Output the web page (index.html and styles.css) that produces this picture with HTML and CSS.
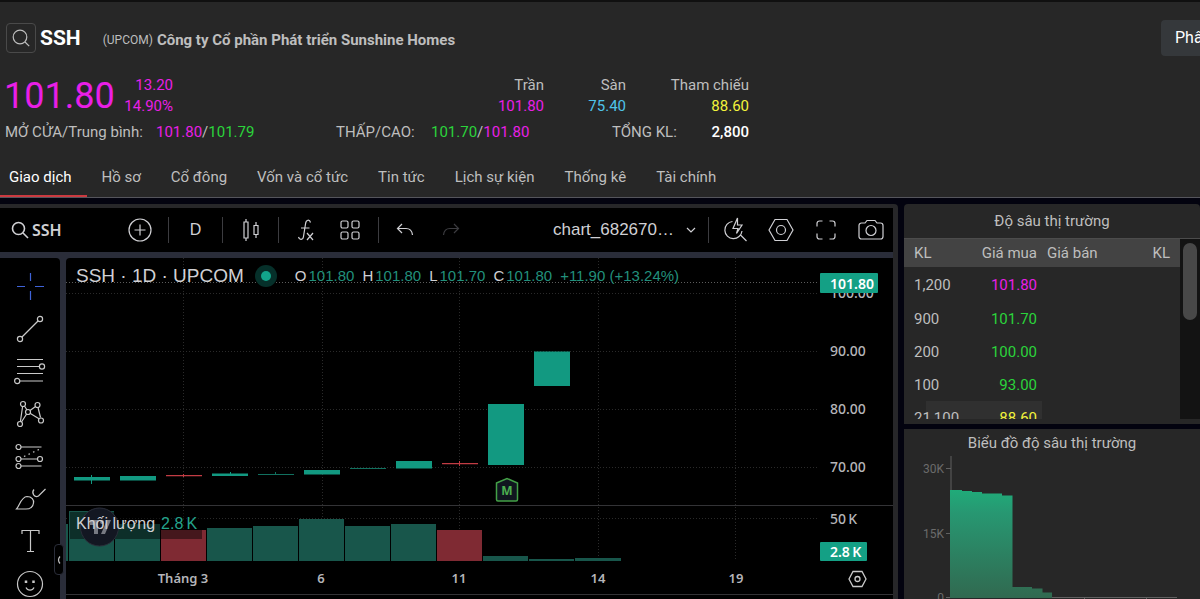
FILE: index.html
```html
<!DOCTYPE html>
<html lang="vi">
<head>
<meta charset="utf-8">
<title>SSH - Công ty Cổ phần Phát triển Sunshine Homes</title>
<link rel="stylesheet" href="styles.css">
</head>
<body>
<header class="quote">
  <div class="company">
    <button class="search-btn" aria-label="Tìm mã">
      <svg width="20" height="20" viewBox="0 0 20 20" class="ico"><circle cx="9" cy="9" r="6.8"/><path d="M14 14l4.2 4.2"/></svg>
    </button>
    <h1 class="ticker">SSH</h1>
    <span class="exchange">(UPCOM)</span>
    <span class="company-name">Công ty Cổ phần Phát triển Sunshine Homes</span>
    <div class="actions"><button class="analyze">Phân tích</button></div>
  </div>
  <div class="prices">
    <span class="last ceil">101.80</span>
    <span class="pair change ceil"><span>13.20</span><span>14.90%</span></span>
    <span class="pair p-ceil"><span>Trần</span><span class="ceil">101.80</span></span>
    <span class="pair p-floor"><span>Sàn</span><span class="floor">75.40</span></span>
    <span class="pair p-ref"><span>Tham chiếu</span><span class="ref">88.60</span></span>
  </div>
  <div class="stats">
    <span class="s-open">MỞ CỬA/Trung bình:</span>
    <span class="s-openv"><span class="ceil">101.80</span>/<span class="up">101.79</span></span>
    <span class="s-low">THẤP/CAO:</span>
    <span class="s-lowv"><span class="up">101.70</span>/<span class="ceil">101.80</span></span>
    <span class="s-vol">TỔNG KL:</span>
    <span class="s-volv">2,800</span>
  </div>
  <nav class="tabs">
    <a href="#" class="tab active">Giao dịch</a>
    <a href="#" class="tab">Hồ sơ</a>
    <a href="#" class="tab">Cổ đông</a>
    <a href="#" class="tab">Vốn và cổ tức</a>
    <a href="#" class="tab">Tin tức</a>
    <a href="#" class="tab">Lịch sự kiện</a>
    <a href="#" class="tab">Thống kê</a>
    <a href="#" class="tab">Tài chính</a>
  </nav>
</header>

<main class="workspace">
  <section class="chart-panel">
    <div class="toolbar">
      <button class="tb symbol"><svg width="18" height="18" viewBox="0 0 18 18" class="ico bold"><circle cx="7.5" cy="7.5" r="6"/><path d="M12 12l5 5"/></svg>SSH</button>
      <button class="tb w57" aria-label="So sánh"><svg width="24" height="24" viewBox="0 0 24 24" class="ico"><circle cx="12" cy="12" r="11"/><path d="M12 6.500v11M6.500 12h11"/></svg></button>
      <i class="sep"></i>
      <button class="tb w53 interval">D</button>
      <i class="sep"></i>
      <button class="tb w55" aria-label="Kiểu nến"><svg width="18" height="24" viewBox="0 0 18 24" class="ico"><path d="M2 4h4v16H2zM4 1v3M4 20v3M12 7.500h4v9h-4zM14 4v3.500M14 16.500V20"/></svg></button>
      <i class="sep"></i>
      <button class="tb w54" aria-label="Chỉ báo"><svg width="20" height="24" viewBox="0 0 20 24" class="ico"><path d="M2.500 19c1 3.500 4.500 3 5-.5L9.500 6C10 1.500 13.500 1 14.500 4.500M5 10h8.500M11 15l6 7M17 15l-6 7"/></svg></button>
      <button class="tb w34" aria-label="Mẫu chỉ báo"><svg width="22" height="22" viewBox="0 0 22 22" class="ico"><rect x="2" y="2" width="7" height="7" rx="1.500"/><rect x="13" y="2" width="7" height="7" rx="1.500"/><rect x="2" y="13" width="7" height="7" rx="1.500"/><rect x="13" y="13" width="7" height="7" rx="1.500"/></svg></button>
      <i class="sep wide"></i>
      <button class="tb w46" aria-label="Hoàn tác"><svg width="18" height="14" viewBox="0 0 18 14" class="ico"><path d="M6 1L1.500 5.500 6 10M1.500 5.500H10c4 0 6 2 6.500 6.500"/></svg></button>
      <button class="tb w46 off" aria-label="Làm lại"><svg width="18" height="14" viewBox="0 0 18 14" class="ico"><path d="M12 1l4.500 4.500L12 10M16.500 5.500H8c-4 0-6 2-6.500 6.500"/></svg></button>
      <div class="tb-right">
        <button class="tb layout">chart_682670…<svg width="10" height="6" viewBox="0 0 10 6" class="ico"><path d="M1 1l4 4 4-4"/></svg></button>
        <i class="sep wide-right"></i>
        <button class="tb w45" aria-label="Tìm nhanh"><svg width="26" height="26" viewBox="0 0 26 26" class="ico"><path d="M9.500 4.500A8.600 8.600 0 1 0 19 14M17.500 18l6 6M14.500 1L10 11.500h5l-1.500 5L19 8h-4.500z"/></svg></button>
        <button class="tb w45" aria-label="Cài đặt"><svg width="26" height="24" viewBox="0 0 26 24" class="ico"><path d="M1 12L7 1.500h12L25 12l-6 10.500H7z"/><circle cx="13" cy="12" r="4.500"/></svg></button>
        <button class="tb w45" aria-label="Toàn màn hình"><svg width="22" height="22" viewBox="0 0 22 22" class="ico"><path d="M2 7.500v-3A2.500 2.500 0 0 1 4.500 2h3M14.500 2h3A2.500 2.500 0 0 1 20 4.500v3M20 14.500v3a2.500 2.500 0 0 1-2.500 2.500h-3M7.500 20h-3A2.500 2.500 0 0 1 2 17.500v-3"/></svg></button>
        <button class="tb w45" aria-label="Chụp ảnh"><svg width="26" height="22" viewBox="0 0 26 22" class="ico"><path d="M1 6.500A2.500 2.500 0 0 1 3.500 4H7l2-2.500h8L19 4h3.500A2.500 2.500 0 0 1 25 6.500v11a2.500 2.500 0 0 1-2.500 2.500h-19A2.500 2.500 0 0 1 1 17.500z"/><circle cx="13" cy="11.500" r="5"/></svg></button>
      </div>
    </div>
    <div class="chart-body">
      <div class="tools">
        <button class="tool cross" aria-label="Con trỏ"><svg width="32" height="28" viewBox="0 0 32 28" class="ico"><path d="M3 14.500h8M21 14.500h9M16.500 1v8M16.500 19v9"/></svg></button>
        <button class="tool" aria-label="Đường xu hướng"><svg width="32" height="28" viewBox="0 0 32 28" class="ico"><circle cx="6" cy="24" r="2.600"/><circle cx="26" cy="4" r="2.600"/><path d="M8 22L24 6"/></svg></button>
        <button class="tool" aria-label="Fibonacci"><svg width="32" height="28" viewBox="0 0 32 28" class="ico"><path d="M3 2.500h26M3 9.500h22M3 16.500h26M6 24h23"/><circle cx="28" cy="9.500" r="2.600"/><circle cx="3.200" cy="24" r="2.600"/></svg></button>
        <button class="tool" aria-label="Mẫu hình"><svg width="32" height="28" viewBox="0 0 32 28" class="ico"><path d="M8.600 6.500L6.400 21.500M10.500 6l2.500 4M16 10.500l5.500-4M24 7.500l2.500 10M16 13.300l9 5.500M12.600 14L7.500 22"/><circle cx="9" cy="4" r="2.500"/><circle cx="23.500" cy="5" r="2.500"/><circle cx="14" cy="12" r="2.500"/><circle cx="6" cy="24" r="2.500"/><circle cx="27" cy="20.500" r="2.500"/></svg></button>
        <button class="tool" aria-label="Dự báo"><svg width="32" height="28" viewBox="0 0 32 28" class="ico"><path d="M7 5h20.500M7 17h16M7 24h20.500"/><path d="M10 14.500L27 6.500" stroke-dasharray="1.500 3.500"/><circle cx="4.500" cy="5" r="2.500"/><circle cx="4.500" cy="17" r="2.500"/><circle cx="26" cy="17" r="2.500"/><circle cx="4.500" cy="24" r="2.500"/></svg></button>
        <button class="tool" aria-label="Cọ vẽ"><svg width="32" height="28" viewBox="0 0 32 28" class="ico"><path d="M2.500 24C6 20 7 12 13 11.500c5 0 7 3.500 6.500 6.500-.5 4-3.500 6-7.500 6z"/><path d="M20 4.500c-3 3.500.5 8.500 4.500 6.500L31.500 4"/></svg></button>
        <button class="tool" aria-label="Văn bản"><svg width="32" height="28" viewBox="0 0 32 28" class="ico"><path d="M8 7V3.500h17V7M16.500 3.500v21M13 24.500h7"/></svg></button>
        <button class="tool" aria-label="Biểu tượng"><svg width="32" height="28" viewBox="0 0 32 28" class="ico"><circle cx="16" cy="14" r="12.500"/><path d="M12 17.500c1.500 3.500 6.500 3.500 8 0"/><path d="M12 10.500v2.500M19.500 10.500v2.500" stroke-width="2.500"/></svg></button>
      </div>
      <button class="collapse" aria-label="Thu gọn"><svg width="4" height="8" viewBox="0 0 4 8" class="ico"><path d="M3 0.500Q0 4 3 7.500"/></svg></button>
      <div class="plot">
        <svg class="plot-svg" viewBox="66 258 827 341" role="img" aria-label="Biểu đồ giá SSH">
          <g class="grid">
            <path d="M66 293.500H819M66 351.500H819M66 409.500H819M66 467.500H819M66 518.500H819"/>
            <path d="M183.500 258V561M322.500 258V561M459.500 258V561M598.500 258V561M735.500 258V561"/>
          </g>
          <path class="price-line" d="M66 282.500H819"/>
          <path class="divider" d="M66 505.500H894M66 594.500H894"/>
          <g class="vol">
            <path d="M66 524h2v37h-2zM69 511h45v50H69zM115 524h45v37h-45zM207 528h45v33h-45zM253 526h45v35h-45zM299 519h45v42h-45zM345 526h45v35h-45zM391 524h45v37h-45zM483 556h45v5h-45zM529 559h45v2h-45zM575 558h46v3h-46z"/>
            <path class="dn" d="M161 530h45v31h-45zM437 530h45v31h-45z"/>
          </g>
          <g class="candles">
            <path d="M74 477h36v3.500H74zM91 475h1v9h-1zM120 476h36v4.500h-36zM212 473.500h36v2.500h-36zM230 472h1v2h-1zM304 470h36v4.500h-36zM396 461h36v7.500h-36zM488 404h36v61h-36zM534 351.500h36v34.500h-36z"/>
            <path class="thin" d="M258 474h36v1h-36zM275 472h1v3h-1zM350 468h36v1h-36z"/>
            <path class="dn" d="M166 475h36v1.200h-36zM183 474h1v3h-1zM442 463h36v1.200h-36zM459 461h1v5h-1z"/>
          </g>
          <path class="badge" d="M496.500 483L507 478.500 517.500 483V499.500a1.500 1.500 0 0 1-1.500 1.500H498a1.500 1.500 0 0 1-1.500-1.500z"/>
          <text class="badge-m" x="507" y="495">M</text>
          <g class="axis">
            <text x="830" y="298">100.00</text>
            <text x="830" y="356">90.00</text>
            <text x="830" y="414">80.00</text>
            <text x="830" y="472">70.00</text>
            <text x="830" y="524">50&#8201;K</text>
          </g>
          <g class="times">
            <text x="183" y="583">Tháng 3</text>
            <text x="321" y="583">6</text>
            <text x="459" y="583">11</text>
            <text x="598" y="583">14</text>
            <text x="736" y="583">19</text>
          </g>
          <rect class="tag" x="820" y="273" width="58" height="20" rx="1"/>
          <text class="tag-text" x="830" y="289">101.80</text>
          <rect class="tag" x="820" y="542" width="47" height="19" rx="1"/>
          <text class="tag-text" x="830" y="557">2.8&#8201;K</text>
          <g class="gear"><path d="M849 579l4-7.500h9l4 7.500-4 7.500h-9z"/><circle cx="857.500" cy="579" r="2.500"/></g>
          <rect class="legend-bg" x="70" y="512" width="132" height="27"/>
          <circle class="tv" cx="99.500" cy="527" r="19"/>
          <path class="tv-mark" d="M90 520h8v14h-4v-9h-4zM107 520h4l-6 14h-4z"/>
          <circle class="tv-mark" cx="102" cy="522" r="2"/>
        </svg>
        <div class="legend">
          <span class="legend-title">SSH · 1D · UPCOM</span>
          <i class="status"></i>
          <span class="ohlc"><span>O<b>101.80</b></span><span>H<b>101.80</b></span><span>L<b>101.70</b></span><span>C<b>101.80</b></span><b>+11.90 (+13.24%)</b></span>
        </div>
        <div class="vol-legend">Khối lượng<b>2.8&#8201;K</b></div>
      </div>
    </div>
  </section>

  <aside class="side">
    <section class="depth">
      <h2 class="side-title">Độ sâu thị trường</h2>
      <div class="depth-scroll">
        <table class="depth-table">
          <thead><tr><th class="qty">KL</th><th class="r">Giá mua</th><th>Giá bán</th><th class="r qty">KL</th></tr></thead>
          <tbody>
            <tr><td>1,200</td><td class="r ceil">101.80</td><td></td><td></td></tr>
            <tr><td>900</td><td class="r up">101.70</td><td></td><td></td></tr>
            <tr><td>200</td><td class="r up">100.00</td><td></td><td></td></tr>
            <tr><td>100</td><td class="r up">93.00</td><td></td><td></td></tr>
            <tr class="full"><td>21,100</td><td class="r ref">88.60</td><td></td><td></td></tr>
          </tbody>
        </table>
        <div class="track"><div class="thumb"></div></div>
      </div>
    </section>
    <section class="depth-chart">
      <h2 class="side-title">Biểu đồ độ sâu thị trường</h2>
      <svg class="depth-svg" viewBox="904 456 296 143" role="img" aria-label="Biểu đồ độ sâu">
        <defs><linearGradient id="fill" x1="0" y1="490" x2="0" y2="600" gradientUnits="userSpaceOnUse"><stop offset="0" stop-color="#20ab79"/><stop offset=".2" stop-color="#279872"/><stop offset="1" stop-color="#31684f"/></linearGradient></defs>
        <path class="depth-axis" d="M951 456V598M946 468.500h5M946 533.500h5M946 597.500H1177M1084.500 597v2M1146.500 597v2"/>
        <path fill="url(#fill)" d="M950 490h12v1h10v1h10v1.500h20v2h10.500V587h19.500v1.500h10.500V592.500h9.500V598H950z"/>
        <g class="depth-labels"><text x="944" y="473">30K</text><text x="944" y="538">15K</text><text x="944" y="602">0</text></g>
      </svg>
    </section>
  </aside>
</main>
</body>
</html>
```
FILE: styles.css
```css
* { box-sizing: border-box; }
body {
  margin: 0;
  height: 100vh;
  display: flex;
  flex-direction: column;
  overflow: hidden;
  background: #03030f;
  color: #bebebe;
  font: 15px/20px Roboto, sans-serif;
}
button { background: none; border: 0; padding: 0; color: inherit; font: inherit; }
h1, h2 { margin: 0; }
.ico { fill: none; stroke: currentColor; stroke-width: 1.2; flex: none; }
.ico.bold { stroke-width: 1.6; }

.ceil { color: #e91fe6; }
.up { color: #2bd43b; }
.floor { color: #4fc3ea; }
.ref { color: #f3f33c; }

/* Quote header */
.quote {
  flex: none;
  background: #272727;
  border-top: 2px solid #101010;
  border-bottom: 1px solid #55555c;
  overflow: hidden;
  white-space: nowrap;
}
.company { display: flex; align-items: center; height: 36px; margin-top: 18px; padding-left: 6px; }
.search-btn {
  width: 30px;
  height: 30px;
  border: 1px solid #4a4a4a;
  border-radius: 4px;
  display: flex;
  align-items: center;
  justify-content: center;
}
.ticker { margin-left: 4px; color: #fff; font-size: 21px; line-height: 24px; }
.exchange { margin: 4px 4px 0 22px; font-size: 12px; }
.company-name { flex: 1; margin-top: 4px; font-weight: 700; }
.actions { flex: 0 0 39px; min-width: 0; }
.analyze {
  height: 36px;
  padding: 0 14px;
  background: #35383b;
  border-radius: 4px;
  color: #fff;
  font-size: 16px;
}
.prices {
  display: grid;
  grid-template-columns: 115px 58px 371px 82px 123px;
  margin-top: 19px;
  padding-bottom: 2px;
}
.last { padding-left: 4px; font-size: 36px; line-height: 43px; }
.pair { display: flex; flex-direction: column; text-align: right; line-height: 21px; }
.stats {
  display: grid;
  grid-template-columns: 151px 180px 95px 181px 66px 71px;
  padding-left: 5px;
  margin-top: 2px;
}
.s-volv { color: #fff; font-weight: 500; text-align: right; }
.tabs { display: flex; margin-top: 21px; }
.tab {
  padding: 4px 15px 8px;
  border-bottom: 2px solid transparent;
  color: inherit;
  text-decoration: none;
}
.tab.active { padding-left: 9px; border-color: #cc3a40; color: #fff; }

/* Workspace */
.workspace { flex: 1; display: flex; gap: 6px; margin-top: 6px; min-height: 0; }
.chart-panel {
  flex: 1;
  min-width: 0;
  display: flex;
  flex-direction: column;
  padding: 4px 5px 0 0;
  background: #272729;
  border-radius: 0 4px 0 0;
}
.toolbar {
  flex: none;
  display: flex;
  align-items: center;
  height: 44px;
  background: #000;
  color: #d0d0d4;
}
.tb { display: flex; align-items: center; justify-content: center; height: 44px; flex: none; }
.symbol { width: 111px; padding-left: 11px; gap: 3px; justify-content: flex-start; font: 600 16px "Noto Sans", sans-serif; }
.w34 { width: 34px; }
.w45 { width: 45px; }
.w46 { width: 46px; }
.w53 { width: 53px; }
.w54 { width: 54px; }
.w55 { width: 55px; }
.w57 { width: 57px; }
.interval { font: 16px "Liberation Sans", sans-serif; }
.off { color: #3c3c40; }
.sep { width: 1px; height: 26px; background: #3c3c40; flex: none; }
.sep.wide { margin: 0 3px 0 11px; }
.sep.wide-right { margin-right: 4px; }
.tb-right { display: flex; align-items: center; margin-left: auto; }
.layout { width: 155px; gap: 12px; justify-content: flex-start; font: 17px "Liberation Sans", sans-serif; }

.chart-body {
  position: relative;
  flex: 1;
  display: flex;
  gap: 6px;
  min-height: 0;
  background: #2a2d39;
  border-top: 6px solid #2a2d39;
}
.tools {
  flex: 0 0 60px;
  display: flex;
  flex-direction: column;
  align-items: center;
  justify-content: space-between;
  padding: 14px 0 1px;
  background: #000;
  border-radius: 0 4px 0 0;
  color: #c9c9c9;
}
.tool { display: flex; }
.cross { color: #3f63d8; }
.collapse {
  position: absolute;
  left: 54px;
  bottom: 24px;
  width: 10px;
  height: 31px;
  display: flex;
  align-items: center;
  justify-content: center;
  background: #000;
  border: 1px solid #2a2d39;
  border-radius: 4px;
}
.plot { position: relative; flex: 1; min-width: 0; background: #000; border-radius: 4px 0 0 0; overflow: hidden; }
.plot-svg { display: block; width: 100%; }
.grid { fill: none; stroke: #2a2a2a; stroke-dasharray: 1 2; }
.price-line { stroke: #5c5c5c; stroke-dasharray: 1 2; }
.divider { stroke: #333336; }
.vol { fill: #18564b; }
.vol .dn { fill: #7f2a33; }
.candles { fill: #129981; }
.candles .thin { fill: #11705f; }
.candles .dn { fill: #c23c44; }
.badge { fill: #10161f; stroke: #43a047; stroke-width: 1.5; }
.badge-m { fill: #4caf50; font: 700 12px "Noto Sans", sans-serif; text-anchor: middle; }
.axis { fill: #b5b5b9; font: 500 14px "Noto Sans", sans-serif; }
.times { fill: #b5b5b9; font: 600 13px "Noto Sans", sans-serif; text-anchor: middle; }
.tag { fill: #14a085; }
.tag-text { fill: #fff; font: 600 14px "Noto Sans", sans-serif; }
.gear { fill: none; stroke: #c9c9c9; stroke-width: 1.3; }
.legend-bg { fill: #000; opacity: .45; }
.tv { fill: #131722; stroke: #2a2d39; }
.tv-mark { fill: #777a82; }
.legend {
  position: absolute;
  top: 8px;
  left: 10px;
  display: flex;
  align-items: center;
  font-family: "Liberation Sans", sans-serif;
  white-space: nowrap;
  color: #d0d0d4;
}
.legend b, .vol-legend b { font-weight: 400; color: #22907c; }
.legend-title { font-size: 19px; }
.status { width: 10px; height: 10px; margin: 0 24px 0 17px; border-radius: 50%; background: #12a58b; box-shadow: 0 0 0 6px #06302a; }
.ohlc { display: flex; gap: 8px; }
.ohlc span b { margin-left: 2px; }
.vol-legend {
  position: absolute;
  top: 256px;
  left: 10px;
  display: flex;
  gap: 6px;
  font-family: "Liberation Sans", sans-serif;
  font-size: 16px;
  color: #d0d0d4;
}
.vol-legend b { color: #24a38c; }

/* Side column */
.side { flex: 0 0 296px; display: flex; flex-direction: column; gap: 5px; min-height: 0; }
.side-title { font-size: 15px; font-weight: 400; text-align: center; }
.depth { background: #272727; border-radius: 4px 4px 0 0; padding-bottom: 5px; }
.depth .side-title { line-height: 34px; }
.depth-scroll { display: flex; height: 181px; overflow: hidden; border-top: 1px solid #4c4c4c; }
.depth-table { width: 100%; border-collapse: collapse; table-layout: fixed; align-self: flex-start; }
.depth-table th, .depth-table td { padding: 0 5px; text-align: left; font-weight: 400; height: 33px; }
.depth-table th { height: 28px; background: #434343; }
.depth-table .qty { width: 22%; }
.depth-table th:first-child, .depth-table td:first-child { padding-left: 10px; }
.depth-table th:last-child { padding-right: 10px; }
.depth-table th.r, .depth-table td.r { text-align: right; }
.depth-table .full td:first-child { background: linear-gradient(90deg, transparent 22px, #303030 22px); }
.depth-table .full td:nth-child(2) { background: #303030; }
.depth-table tbody tr:first-child td { height: 35px; }
.track { flex: 0 0 20px; padding: 4px 3px; background: #131313; }
.thumb { height: 77px; border-radius: 7px; background: #484848; }
.depth-chart { flex: 1; min-height: 0; background: #272727; overflow: hidden; }
.depth-chart .side-title { padding-top: 2px; line-height: 25px; }
.depth-svg { display: block; width: 100%; }
.depth-axis { fill: none; stroke: #616161; }
.depth-labels { fill: #6b6b6b; font-size: 12px; text-anchor: end; }
```
